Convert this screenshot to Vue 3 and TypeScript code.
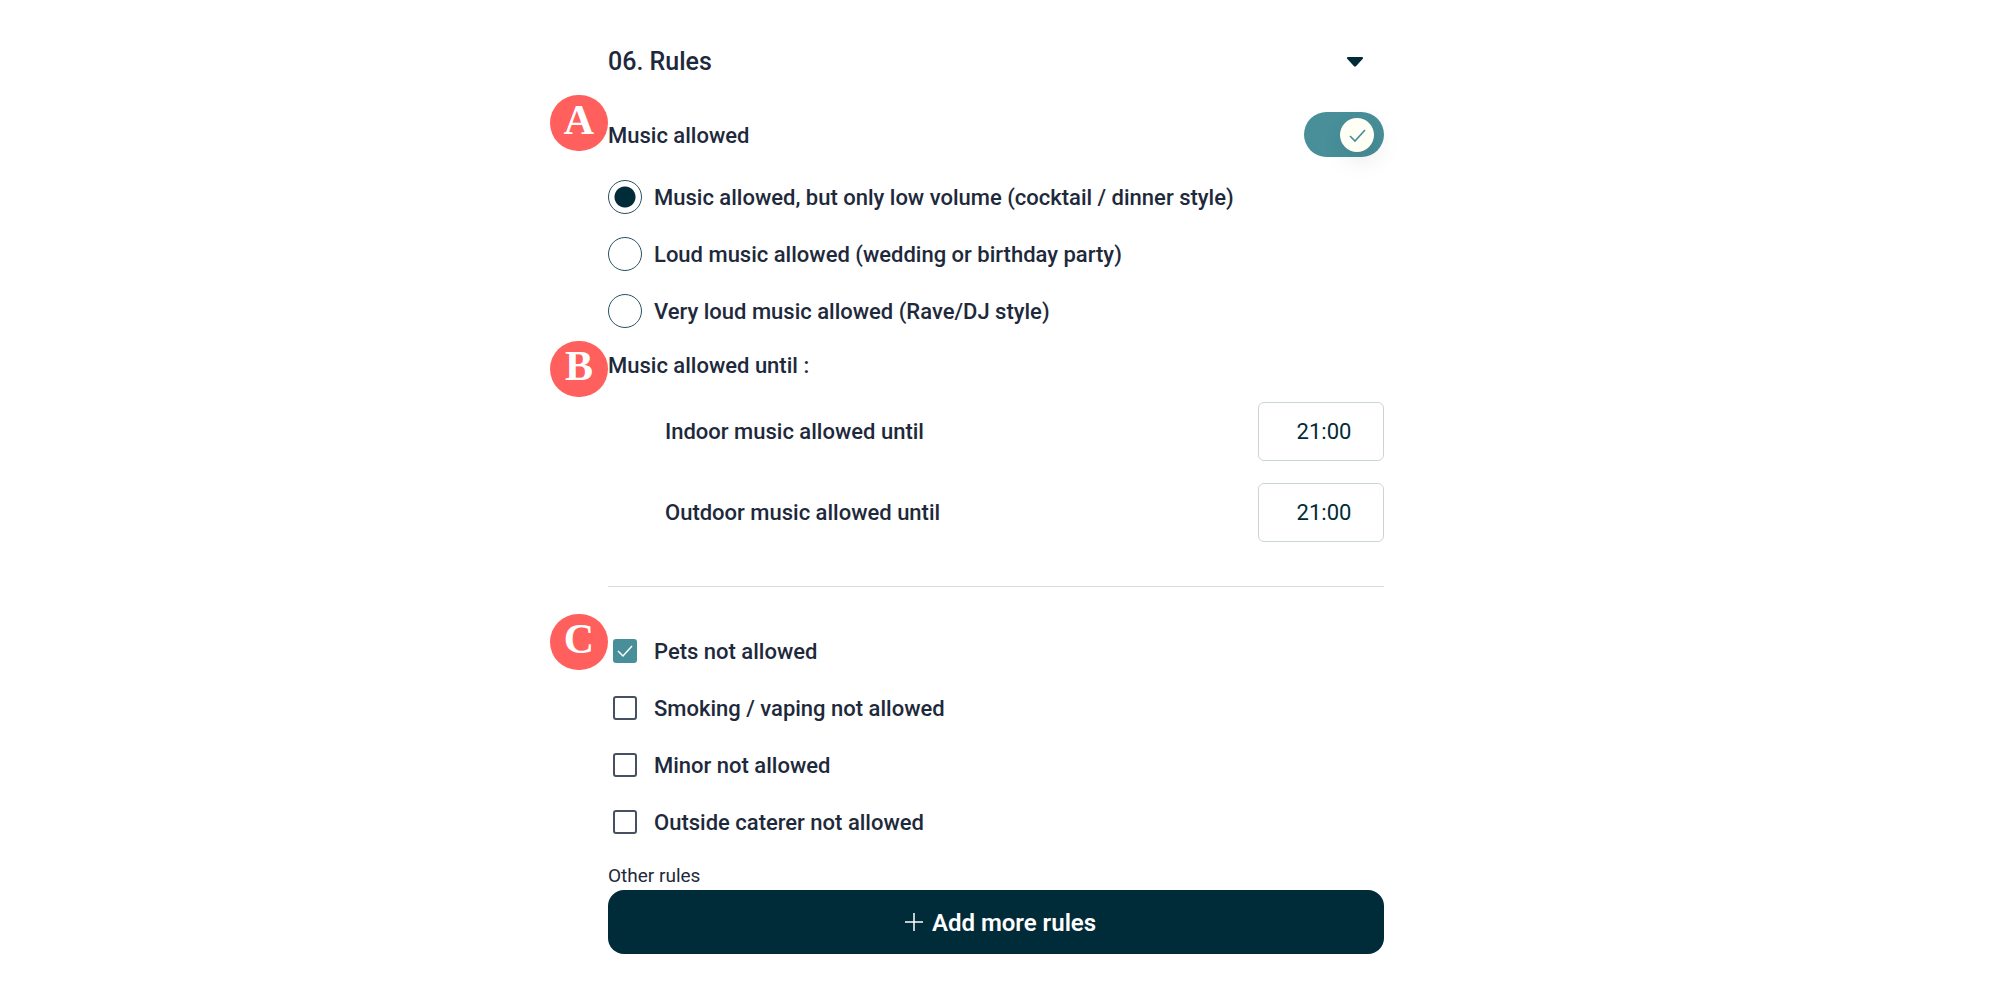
<script setup lang="ts">
import { ref } from 'vue'

interface Option {
  id: string
  label: string
}

interface Curfew extends Option {
  time: string
}

interface Restriction extends Option {
  checked: boolean
}

const open = ref(true)
const musicAllowed = ref(true)
const volume = ref('low')

const volumes: Option[] = [
  { id: 'low', label: 'Music allowed, but only low volume (cocktail / dinner style)' },
  { id: 'loud', label: 'Loud music allowed (wedding or birthday party)' },
  { id: 'very-loud', label: 'Very loud music allowed (Rave/DJ style)' },
]

const curfews = ref<Curfew[]>([
  { id: 'indoor', label: 'Indoor music allowed until', time: '21:00' },
  { id: 'outdoor', label: 'Outdoor music allowed until', time: '21:00' },
])

const restrictions = ref<Restriction[]>([
  { id: 'pets', label: 'Pets not allowed', checked: true },
  { id: 'smoking', label: 'Smoking / vaping not allowed', checked: false },
  { id: 'minor', label: 'Minor not allowed', checked: false },
  { id: 'caterer', label: 'Outside caterer not allowed', checked: false },
])
</script>

<template>
  <main class="page">
    <section class="rules">
      <h2 class="heading">
        <button class="heading-button" type="button" :aria-expanded="open" @click="open = !open">
          <span>06. Rules</span>
          <svg class="caret" viewBox="0 0 18 12" aria-hidden="true">
            <path d="M2 1h14c1 0 1.400 1 .8 1.700l-6.600 7.300c-.7.800-1.700.800-2.400 0L1.200 2.700C.6 2 1 1 2 1z" />
          </svg>
        </button>
      </h2>

      <div v-show="open" class="body">
        <div class="row marked">
          <span class="badge">A</span>
          <label class="label" for="music">Music allowed</label>
          <span class="toggle">
            <input id="music" v-model="musicAllowed" type="checkbox" role="switch" />
            <span class="thumb">
              <svg viewBox="0 0 34 34" aria-hidden="true"><path d="M10 18l5 5L25 12" /></svg>
            </span>
          </span>
        </div>

        <div class="options" role="radiogroup" aria-label="Music volume">
          <label v-for="option in volumes" :key="option.id" class="option">
            <input v-model="volume" class="radio" type="radio" name="volume" :value="option.id" />
            <span class="label">{{ option.label }}</span>
          </label>
        </div>

        <div class="subheading marked">
          <span class="badge">B</span>
          <span>Music allowed until :</span>
        </div>

        <div class="curfews">
          <div v-for="curfew in curfews" :key="curfew.id" class="row">
            <label :for="curfew.id">{{ curfew.label }}</label>
            <input :id="curfew.id" v-model="curfew.time" class="time" type="text" />
          </div>
        </div>

        <hr class="divider" />

        <div class="options marked">
          <span class="badge badge-list">C</span>
          <label v-for="item in restrictions" :key="item.id" class="option">
            <span class="check">
              <input v-model="item.checked" type="checkbox" />
              <svg v-if="item.checked" viewBox="0 0 24 24" aria-hidden="true">
                <path d="M5 12l5 5L19 7" />
              </svg>
            </span>
            <span class="label">{{ item.label }}</span>
          </label>
        </div>

        <p class="other">Other rules</p>
        <button class="add" type="button">
          <svg viewBox="0 0 20 20" aria-hidden="true"><path d="M10 1v18M1 10h18" /></svg>
          <span class="label">Add more rules</span>
        </button>
      </div>
    </section>
  </main>
</template>

<style>
body {
  margin: 0;
  background: #fff;
}
</style>

<style scoped>
.page {
  box-sizing: border-box;
  display: flex;
  justify-content: center;
  padding: 32px 8px 32px 0;
  color: #1e293b;
  font: 500 22px/32px Roboto, "Liberation Sans", sans-serif;
}

.rules {
  width: 100%;
  max-width: 776px;
}

.heading {
  margin: 0;
  font-weight: 500;
}

.heading-button {
  display: flex;
  align-items: center;
  justify-content: space-between;
  width: 100%;
  height: 60px;
  padding: 0 20px 0 0;
  border: 0;
  background: none;
  color: inherit;
  font: inherit;
  font-size: 25px;
}

.caret {
  width: 18px;
  height: 12px;
  fill: #002b38;
}

.body {
  padding-top: 20px;
}

.label {
  padding-top: 2px;
}

.row {
  display: flex;
  align-items: center;
  justify-content: space-between;
}

.marked {
  position: relative;
}

.badge {
  position: absolute;
  right: 100%;
  top: 50%;
  display: flex;
  justify-content: center;
  box-sizing: border-box;
  width: 58px;
  height: 56px;
  margin-top: -40px;
  border-radius: 28px;
  background: #ff605d;
  color: #fff;
  font: 700 42px/50px "Liberation Serif", serif;
}

.subheading .badge {
  margin-top: -24px;
}

.badge-list {
  top: 20px;
}

.toggle {
  display: grid;
  align-items: center;
  width: 80px;
  height: 45px;
}

.toggle > * {
  grid-area: 1 / 1;
}

.toggle input {
  appearance: none;
  width: 80px;
  height: 45px;
  margin: 0;
  border-radius: 24px;
  background: #b6c4c8;
}

.toggle input:checked {
  background: #488f9a;
}

.thumb {
  width: 34px;
  height: 34px;
  margin-left: 8px;
  border-radius: 50%;
  background: #fffff6;
  box-shadow: 4px 8px 24px rgba(0, 0, 0, 0.1);
  pointer-events: none;
}

.toggle input:checked + .thumb {
  margin-left: 36px;
}

.thumb svg {
  display: block;
  fill: none;
  stroke: #488f9a;
  stroke-width: 1.7;
}

.options {
  display: flex;
  flex-direction: column;
  gap: 23px;
}

.row + .options {
  padding-top: 23px;
}

.option {
  display: flex;
  align-items: center;
  gap: 12px;
  height: 34px;
}

.radio {
  appearance: none;
  box-sizing: border-box;
  width: 34px;
  height: 34px;
  margin: 0;
  border: 1px solid #285260;
  border-radius: 50%;
}

.radio:checked {
  background: radial-gradient(circle, #002b38 10px, transparent 11px);
}

.subheading {
  padding: 22px 0 20px;
}

.curfews {
  display: flex;
  flex-direction: column;
  gap: 22px;
  padding-left: 57px;
}

.time {
  box-sizing: border-box;
  width: 126px;
  height: 59px;
  padding: 0 0 0 6px;
  border: 1px solid #ccd5d5;
  border-radius: 6px;
  background: #fff;
  color: #002b38;
  font: inherit;
  font-weight: 400;
  text-align: center;
}

.divider {
  height: 1px;
  margin: 44px 0 47px;
  border: 0;
  background: #d5dddd;
}

.check {
  display: grid;
  place-items: center;
  width: 34px;
  height: 34px;
}

.check > * {
  grid-area: 1 / 1;
}

.check input {
  appearance: none;
  box-sizing: border-box;
  width: 24px;
  height: 24px;
  margin: 0;
  border: 2px solid #475061;
  border-radius: 3px;
}

.check input:checked {
  border: 0;
  background: #488f9a;
}

.check svg {
  width: 24px;
  height: 24px;
  fill: none;
  stroke: #fff;
  stroke-width: 1.5;
  pointer-events: none;
}

.other {
  margin: 25px 0 2px;
  font-size: 19px;
  font-weight: 400;
  line-height: 24px;
}

.add {
  box-sizing: border-box;
  display: flex;
  align-items: center;
  justify-content: center;
  gap: 8px;
  width: 100%;
  height: 64px;
  padding: 0 0 0 8px;
  border: 0;
  border-radius: 16px;
  background: #002b38;
  color: #fff;
  font: inherit;
  font-size: 24px;
  font-weight: 600;
}

.add svg {
  width: 20px;
  height: 20px;
  stroke: #fff;
  stroke-width: 1.5;
}
</style>
